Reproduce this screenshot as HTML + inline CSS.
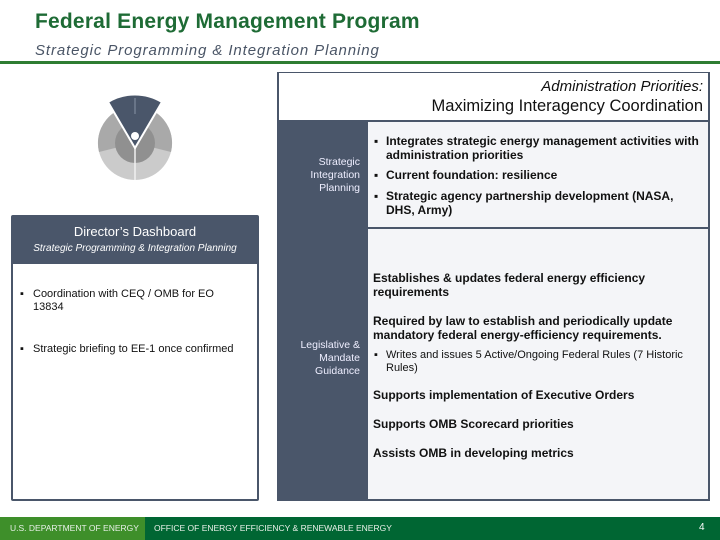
<!DOCTYPE html>
<html><head><meta charset="utf-8"><style>
*{margin:0;padding:0;box-sizing:border-box}
body{width:720px;height:540px;position:relative;background:#fff;font-family:"Liberation Sans",sans-serif;overflow:hidden}
.a{position:absolute}
.t1{left:35px;top:10px;font-size:21px;font-weight:bold;color:#1e6b35;letter-spacing:0.2px}
.t2{left:35px;top:42px;font-size:15px;font-style:italic;color:#4a5566;letter-spacing:0.9px}
.gl{left:0;top:61px;width:720px;height:3px;background:#2e7d32}
.b{font-size:12px;font-weight:bold;color:#111;line-height:14px}
.n{font-size:11px;color:#111;line-height:13px}
.lab{color:#eef;font-size:10.5px;text-align:right;line-height:13px}
</style></head><body>
<div class="a t1">Federal Energy Management Program</div>
<div class="a t2">Strategic Programming &amp; Integration Planning</div>
<div class="a gl"></div>

<svg class="a" style="left:95px;top:88px" width="80" height="95" viewBox="0 0 80 95">
<circle cx="40" cy="55" r="37" fill="#cbcbcb"/>
<path d="M40 55 L4 64 A37 37 0 0 1 20 24Z" fill="#a9a9a9"/>
<path d="M40 55 L60 24 A37 37 0 0 1 76 64Z" fill="#a9a9a9"/>
<circle cx="40" cy="55" r="20" fill="#909090"/>
<line x1="40" y1="60" x2="40" y2="92" stroke="#f0f0f0" stroke-width="1.5"/>
<path d="M40 60 L13 14 A52 52 0 0 1 67 14Z" fill="#4a566a" stroke="#fff" stroke-width="2"/>
<line x1="40" y1="10" x2="40" y2="26" stroke="#8894a6" stroke-width="1"/>
<circle cx="40" cy="48" r="4" fill="#fff"/>
</svg>

<!-- right panel -->
<div class="a" style="left:277px;top:72px;width:433px;height:429px;background:#4a566a"></div>
<div class="a" style="left:279px;top:73px;width:429px;height:47px;background:#fff"></div>
<div class="a" style="left:280px;top:78px;width:423px;text-align:right;font-size:15px;font-style:italic;color:#111">Administration Priorities:</div>
<div class="a" style="left:280px;top:97px;width:423px;text-align:right;font-size:16.5px;color:#111">Maximizing Interagency Coordination</div>
<div class="a" style="left:368px;top:122px;width:340px;height:105px;background:#f4f5f8"></div>
<div class="a" style="left:368px;top:229px;width:340px;height:270px;background:#f4f5f8"></div>
<div class="a lab" style="left:280px;top:156px;width:80px">Strategic<br>Integration<br>Planning</div>
<div class="a lab" style="left:280px;top:339px;width:80px">Legislative &amp;<br>Mandate<br>Guidance</div>

<div class="a b" style="left:374px;top:134px">▪</div>
<div class="a b" style="left:386px;top:134px;width:320px">Integrates strategic energy management activities with administration priorities</div>
<div class="a b" style="left:374px;top:168px">▪</div>
<div class="a b" style="left:386px;top:168px">Current foundation: resilience</div>
<div class="a b" style="left:374px;top:189px">▪</div>
<div class="a b" style="left:386px;top:189px;width:300px">Strategic agency partnership development (NASA, DHS, Army)</div>

<div class="a b" style="left:373px;top:271px;width:290px">Establishes &amp; updates federal energy efficiency requirements</div>
<div class="a b" style="left:373px;top:314px;width:330px">Required by law to establish and periodically update mandatory federal energy-efficiency requirements.</div>
<div class="a n" style="left:374px;top:349px">▪</div>
<div class="a n" style="left:386px;top:349px;width:315px">Writes and issues 5 Active/Ongoing Federal Rules (7 Historic Rules)</div>
<div class="a b" style="left:373px;top:388px">Supports implementation of Executive Orders</div>
<div class="a b" style="left:373px;top:417px">Supports OMB Scorecard priorities</div>
<div class="a b" style="left:373px;top:446px">Assists OMB in developing metrics</div>

<!-- left dashboard -->
<div class="a" style="left:11px;top:215px;width:248px;height:286px;background:#4a566a;border-radius:2px"></div>
<div class="a" style="left:13px;top:264px;width:244px;height:235px;background:#fff"></div>
<div class="a" style="left:11px;top:224px;width:248px;text-align:center;font-size:13px;color:#fff">Director’s Dashboard</div>
<div class="a" style="left:11px;top:243px;width:248px;text-align:center;font-size:10px;font-style:italic;color:#fff">Strategic Programming &amp; Integration Planning</div>
<div class="a n" style="left:20px;top:288px">▪</div>
<div class="a n" style="left:33px;top:288px;width:200px">Coordination with CEQ / OMB for EO 13834</div>
<div class="a n" style="left:20px;top:343px">▪</div>
<div class="a n" style="left:33px;top:343px">Strategic briefing to EE-1 once confirmed</div>

<!-- footer -->
<div class="a" style="left:0;top:517px;width:720px;height:23px;background:#006633"></div>
<div class="a" style="left:0;top:517px;width:145px;height:23px;background:#3e8f2a"></div>
<div class="a" style="left:10px;top:523px;font-size:8.5px;color:#e8f0e8">U.S. DEPARTMENT OF ENERGY</div>
<div class="a" style="left:154px;top:523px;font-size:8.5px;color:#e8f0e8">OFFICE OF ENERGY EFFICIENCY &amp; RENEWABLE ENERGY</div>
<div class="a" style="left:699px;top:522px;font-size:10px;color:#fff">4</div>
</body></html>
